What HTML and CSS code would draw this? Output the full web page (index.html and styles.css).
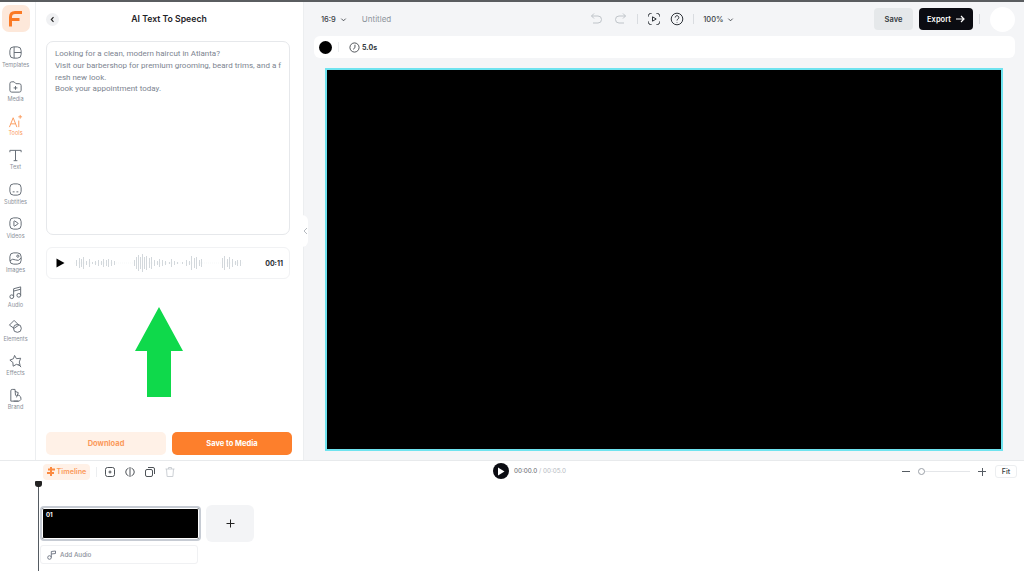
FILE: index.html
```html
<!DOCTYPE html>
<html lang="en">
<head>
<meta charset="utf-8">
<title>AI Text To Speech</title>
<link rel="stylesheet" href="styles.css">
</head>
<body>
<div class="app">
  <div class="topline"></div>
  <div class="main">
    <nav class="rail">
      <div class="logo">
        <svg width="13" height="16" viewBox="0 0 13 16"><path class="logo-f" d="M1.500 15.500V6q0-4.500 4.500-4.500h7M1.500 8.500h9"/></svg>
      </div>
      <div class="rail-item">
        <svg class="ri" viewBox="0 0 16 16"><rect x="2" y="2" width="12" height="12" rx="4"/><path d="M6.500 2v12M6.500 8H14"/></svg>
        <span>Templates</span>
      </div>
      <div class="rail-item">
        <svg class="ri" viewBox="0 0 16 16"><path d="M2 5q0-2 2-2h2.500l2 2H12q2 0 2 2v5q0 2-2 2H4q-2 0-2-2zM8 7.500v4M6 9.500h4"/></svg>
        <span>Media</span>
      </div>
      <div class="rail-item active">
        <svg class="ri" viewBox="0 0 16 16"><path d="M1.500 14 5.500 4l4 10M3 10.500h5M11.500 7v7M13 1v4M11 3h4"/></svg>
        <span>Tools</span>
      </div>
      <div class="rail-item">
        <svg class="ri" viewBox="0 0 16 16"><path d="M2 4.500V2.500h12v2M8 2.500v11M6 13.500h4"/></svg>
        <span>Text</span>
      </div>
      <div class="rail-item">
        <svg class="ri" viewBox="0 0 16 16"><rect x="2" y="2" width="12" height="12" rx="4"/><path d="M5 10.500h2M9 10.500h2"/></svg>
        <span>Subtitles</span>
      </div>
      <div class="rail-item">
        <svg class="ri" viewBox="0 0 16 16"><rect x="2" y="2" width="12" height="12" rx="4"/><path d="M6.300 5.800q0-.8.800-.5l3.300 2.100q.6.600 0 1.200l-3.300 2.100q-.8.300-.8-.5z"/></svg>
        <span>Videos</span>
      </div>
      <div class="rail-item">
        <svg class="ri" viewBox="0 0 16 16"><rect x="2" y="2" width="12" height="12" rx="4"/><circle cx="10.500" cy="5.500" r="1.200"/><path d="M2 10.500q3-3 6-1t6-2"/></svg>
        <span>Images</span>
      </div>
      <div class="rail-item">
        <svg class="ri" viewBox="0 0 16 16"><circle cx="4" cy="12.500" r="2"/><circle cx="11.500" cy="11" r="2"/><path d="M6 12.500V4l7.500-2v9M6 6.500l7.500-2"/></svg>
        <span>Audio</span>
      </div>
      <div class="rail-item">
        <svg class="ri" viewBox="0 0 16 16"><path d="M6.500 1.500 11.500 6.500 6.500 10 1.500 6.500z"/><circle cx="10" cy="10" r="4.200"/></svg>
        <span>Elements</span>
      </div>
      <div class="rail-item">
        <svg class="ri" viewBox="0 0 16 16"><path d="M7 1.500l2 3.500 4.500-.5-1.500 4 1 4-4-1.500-3.500 2-.3-4L2 6.500 5.800 5zM11 11l3 3"/></svg>
        <span>Effects</span>
      </div>
      <div class="rail-item">
        <svg class="ri" viewBox="0 0 16 16"><path d="M3 14V3q0-1.500 1.500-1.500h3L8 8M3 14h8"/><path d="M7.500 3.500 11 5l-2 5M9 8a3 3 0 1 1 3 6H6"/></svg>
        <span>Brand</span>
      </div>
    </nav>

    <section class="panel">
      <header class="panel-head">
        <span class="back"><svg width="7" height="7" viewBox="0 0 7 7"><path d="M4.500 1.200 2.300 3.500l2.200 2.300"/></svg></span>
        <h1>AI Text To Speech</h1>
      </header>
      <div class="textbox">Looking for a clean, modern haircut in Atlanta?<br>Visit our barbershop for premium grooming, beard trims, and a fresh new look.<br>Book your appointment today.</div>
      <div class="player">
        <svg class="play-tri" width="9" height="10" viewBox="0 0 9 10"><path d="M0.500 0.500 8.500 5 0.500 9.500z"/></svg>
        <svg class="wave" width="170" height="22" viewBox="0 0 170 22"><path d="M0 11h170" class="wave-base"/><path class="wave-bars" d="M2 8v6M5 6v10M7 7v8M9 5v12M12 9v4M15 7v8M18 10v2M21 9v4M24 8v6M27 9v4M29 7v8M32 8v6M34 7v8M37 8v6M40 9v4M60 8v6M62 5v12M64 3v16M66 5v12M68 2v18M70 5v12M72 4v14M75 6v10M77 5v12M80 8v6M83 9v4M85 7v8M88 8v6M91 9v4M95 10v2M97 7v8M100 9v4M103 10v2M108 10v2M112 8v6M115 9v4M117 4v14M120 6v10M122 5v12M125 8v6M127 7v8M148 6v10M150 4v14M153 7v8M155 5v12M158 7v8M161 9v4M163 8v6M166 8v6"/></svg>
        <span class="dur">00:11</span>
      </div>
      <div class="panel-spacer"></div>
      <div class="panel-actions">
        <button class="btn-soft">Download</button>
        <button class="btn-solid">Save to Media</button>
      </div>
      <svg class="arrow" width="50" height="92" viewBox="0 0 50 92"><path d="M25 1 49 45H37V91H13V45H1z"/></svg>
    </section>

    <section class="editor">
      <span class="collapse"><svg width="5" height="8" viewBox="0 0 5 8"><path d="M4 1 1 4l3 3"/></svg></span>
      <header class="topbar">
        <span class="ratio">16:9 <svg class="chev" viewBox="0 0 8 8"><path d="M1.500 3 4 5.500 6.500 3"/></svg></span>
        <span class="doc-name">Untitled</span>
        <div class="top-tools">
          <svg class="ti faint undo" viewBox="0 0 14 14"><path d="M5 1.500 2.500 4 5 6.500M2.500 4H9a3 3 0 0 1 0 7H4"/></svg>
          <svg class="ti faint" viewBox="0 0 14 14"><path d="M9 1.500 11.500 4 9 6.500M11.500 4H5a3 3 0 0 0 0 7h5"/></svg>
          <i class="vsep"></i>
          <svg class="ti" viewBox="0 0 14 14"><path d="M1.500 4.500v-1a2 2 0 0 1 2-2h1M9.500 1.500h1a2 2 0 0 1 2 2v1M12.500 9.500v1a2 2 0 0 1-2 2h-1M4.500 12.500h-1a2 2 0 0 1-2-2v-1"/><path d="M5.500 4.800v4.400L9.200 7z"/></svg>
          <svg class="ti" viewBox="0 0 14 14"><circle cx="7" cy="7" r="5.800"/><path d="M5.200 5.500a1.800 1.800 0 1 1 2.800 1.500q-1 .6-1 1.500M7 10v.6"/></svg>
          <i class="vsep"></i>
          <span class="zoom">100% <svg class="chev" viewBox="0 0 8 8"><path d="M1.500 3 4 5.500 6.500 3"/></svg></span>
        </div>
        <button class="btn-save">Save</button>
        <button class="btn-export">Export <svg width="10" height="8" viewBox="0 0 10 8"><path d="M1 4h8M6 1l3 3-3 3"/></svg></button>
        <i class="vsep"></i>
        <span class="avatar"></span>
      </header>
      <div class="propbar">
        <span class="swatch"></span>
        <i class="vsep"></i>
        <svg class="clock" viewBox="0 0 12 12"><circle cx="6" cy="6" r="5"/><path d="M6.500 3v3.200L4.500 8"/></svg>
        <span class="secs">5.0s</span>
      </div>
      <div class="stage-wrap"><div class="stage"></div></div>
    </section>
  </div>

  <footer class="timeline">
    <div class="tl-bar">
      <div class="tl-left">
        <span class="tl-pill">
          <svg width="8" height="9" viewBox="0 0 8 9"><path d="M3 0h2v1.500h3v2H5V5h2v2H5v2H3V7H0V5h3V3.500H1v-2h2z"/></svg>
          Timeline
        </span>
        <i class="vsep"></i>
        <svg class="tli" viewBox="0 0 12 12"><rect x="1.500" y="1.500" width="9" height="9" rx="2"/><path d="M6 4.500v3M4.500 6h3"/></svg>
        <svg class="tli" viewBox="0 0 12 12"><path d="M6 1v10M4.500 2.200a4 4 0 0 0 0 7.600M7.500 2.200a4 4 0 0 1 0 7.600"/></svg>
        <svg class="tli" viewBox="0 0 12 12"><rect x="1.500" y="3.500" width="7" height="7" rx="1.500"/><path d="M4 1.500h5a1.500 1.500 0 0 1 1.500 1.500v5"/></svg>
        <svg class="tli off" viewBox="0 0 12 12"><path d="M1.500 3h9M4.500 3V1.500h3V3M2.500 3l.6 7.500h5.800L9.500 3"/></svg>
      </div>
      <div class="tl-center">
        <span class="tl-play"><svg width="8" height="9" viewBox="0 0 8 9"><path d="M1 .5 7.500 4.500 1 8.500z"/></svg></span>
        <span class="time"><b>00:00.0</b> / 00:05.0</span>
      </div>
      <div class="tl-right">
        <span class="pm"></span>
        <span class="slider"><i></i></span>
        <span class="pm plus"></span>
        <button class="fit">Fit</button>
      </div>
    </div>
    <div class="tracks">
      <div class="clips">
        <div class="clip"><span>01</span></div>
        <div class="add-clip"><svg width="9" height="9" viewBox="0 0 9 9"><path d="M4.500.5v8M.5 4.500h8"/></svg></div>
      </div>
      <div class="audio-row">
        <svg class="note" viewBox="0 0 10 10"><circle cx="2.500" cy="7.500" r="1.800"/><path d="M4.300 7.500V1.500L8.500 1v2.500L4.300 4"/></svg>
        Add Audio
      </div>
    </div>
    <div class="playhead"></div>
  </footer>
</div>
</body>
</html>
```
FILE: styles.css
```css
* { box-sizing: border-box; }
html, body { margin: 0; padding: 0; height: 100%; overflow: hidden; }
body { font-family: Inter, "Liberation Sans", sans-serif; color: #111827; background: #fff; }
button { font-family: inherit; border: 0; padding: 0; flex: none; }
svg { display: block; flex: none; }
i { display: block; }

.app { width: 1024px; height: 571px; display: flex; flex-direction: column; }
.topline { height: 2px; background: #5a5d60; flex: none; }
.main { height: 458px; flex: none; display: flex; }

.rail { width: 36px; flex: none; border-right: 1px solid #eceef0; display: flex; flex-direction: column; align-items: center; padding-right: 4px; }
.logo { width: 28px; height: 27px; flex: none; margin-top: 3px; margin-bottom: 7px; border-radius: 7px; background: #fde8da; display: flex; align-items: center; justify-content: center; }
.logo-f { fill: none; stroke: #fb7a24; stroke-width: 3; }
.rail-item { width: 100%; height: 34.300px; flex: none; display: flex; flex-direction: column; align-items: center; padding-top: 6px; color: #8a9099; font-size: 5.600px; line-height: 7px; white-space: nowrap; }
.ri { width: 15px; height: 15px; margin-bottom: 1.500px; fill: none; stroke: #5f6670; stroke-width: 1; }
.rail-item.active { color: #fb9a5b; }
.rail-item.active .ri { stroke: #fb9a5b; }

.panel { position: relative; width: 267px; flex: none; background: #fff; padding: 0 13px 5px 10px; display: flex; flex-direction: column; }
.panel-head { position: relative; height: 39px; flex: none; display: flex; align-items: center; justify-content: center; padding-left: 2px; padding-bottom: 5px; }
.panel-head h1 { margin: 0; font-size: 8.700px; line-height: 12px; font-weight: 600; color: #1f2328; }
.back { position: absolute; left: 0; top: 10.500px; width: 13px; height: 13px; border-radius: 50%; background: #f0f1f3; display: flex; align-items: center; justify-content: center; }
.back path { fill: none; stroke: #222; stroke-width: 1.100; }
.textbox { height: 194px; flex: none; border: 1px solid #e6e8eb; border-radius: 7px; padding: 6px 8px; font: 400 8px/11.800px Roboto, sans-serif; color: #7c8490; word-break: break-all; }
.player { margin-top: 12px; height: 32px; flex: none; border: 1px solid #f1f2f4; border-radius: 6px; display: flex; align-items: center; padding: 0 6px 0 9px; }
.play-tri path { fill: #000; }
.wave { margin-left: 9px; }
.wave-base { stroke: #eef0f1; stroke-width: .5; stroke-dasharray: 1 1; fill: none; }
.wave-bars { stroke: #d3d8dc; stroke-width: 1; fill: none; shape-rendering: crispEdges; }
.dur { margin-left: auto; font-size: 7px; font-weight: 700; color: #2a2e33; }
.panel-spacer { flex: 1; }
.panel-actions { display: flex; gap: 6px; width: 246px; }
.panel-actions button { width: 120px; height: 23px; border-radius: 5px; font-size: 7.500px; font-weight: 700; }
.btn-soft { background: #fff1e7; color: #fb9a5b; }
.btn-solid { background: #fd7f2c; color: #fff; }
.arrow { position: absolute; left: 98px; top: 304px; }
.arrow path { fill: #0fd94b; }

.editor { position: relative; flex: 1; min-width: 0; background: #f4f5f7; border-left: 1px solid #eceef0; display: flex; flex-direction: column; }
.collapse { position: absolute; left: -2px; top: 213px; width: 6px; height: 32px; background: #fff; border-radius: 0 6px 6px 0; display: flex; align-items: center; justify-content: center; }
.collapse path { fill: none; stroke: #b5bac0; stroke-width: 1; }
.topbar { height: 34px; flex: none; display: flex; align-items: center; padding: 0 9px 0 17px; }
.ratio, .zoom { display: flex; align-items: center; gap: 4px; font-size: 7.500px; font-weight: 500; color: #3a3f45; }
.chev { width: 7px; height: 7px; fill: none; stroke: #3a3f45; stroke-width: 1; }
.doc-name { margin-left: 15px; font-size: 8px; color: #8d949c; }
.top-tools { margin-left: 198px; display: flex; align-items: center; gap: 9px; }
.ti { width: 14px; height: 14px; fill: none; stroke: #2f343a; stroke-width: 1; }
.ti.faint { stroke: #bfc4c9; }
.ti.undo { margin-right: 2px; }
.vsep { width: 1px; height: 10px; background: #d9dce0; flex: none; }
.btn-save { margin-left: auto; width: 39px; height: 22px; border-radius: 4px; background: #e5e8ea; font-size: 7.500px; font-weight: 600; color: #33383d; }
.btn-export { margin-left: 6px; margin-right: 6px; width: 54px; height: 22px; border-radius: 4px; background: #0b0c12; color: #fff; font-size: 7.500px; font-weight: 600; display: flex; align-items: center; justify-content: center; gap: 4px; }
.btn-export path { fill: none; stroke: #fff; stroke-width: 1.200; }
.avatar { margin-left: 10px; width: 25px; height: 25px; flex: none; border-radius: 50%; background: #fff; }
.propbar { margin: 0 9px 0 10px; height: 22px; flex: none; background: #fff; border-radius: 6px; display: flex; align-items: center; padding-left: 5px; }
.swatch { width: 13px; height: 13px; border-radius: 50%; background: #000; }
.propbar .vsep { margin: 0 10px 0 6px; background: #eceef0; }
.clock { width: 11px; height: 11px; fill: none; stroke: #2f343a; stroke-width: .9; margin-right: 2px; }
.secs { font-size: 7px; font-weight: 700; color: #33383d; }
.stage-wrap { padding: 10px 21px 0 21px; }
.stage { height: 383px; background: #000; border: 2px solid #6fe3ef; }

.timeline { position: relative; flex: 1; border-top: 1px solid #e8eaec; background: #fff; }
.tl-bar { height: 21px; display: flex; align-items: center; position: relative; }
.tl-left { display: flex; align-items: center; gap: 8px; padding-left: 43px; }
.tl-pill { height: 16px; width: 47px; border-radius: 4px; background: #fff1e7; color: #fb9a5b; font-size: 7.200px; font-weight: 600; display: flex; align-items: center; justify-content: center; gap: 2px; }
.tl-pill path { fill: #fb8a40; }
.tl-left .vsep { margin: 0 -1px 0 -2px; background: #eceef0; }
.tli { width: 12px; height: 12px; fill: none; stroke: #3a3f45; stroke-width: .9; }
.tli.off { stroke: #c6cbd0; }
.tl-center { position: absolute; left: 493px; top: 0; display: flex; align-items: center; gap: 5px; height: 20px; }
.tl-play { width: 16px; height: 16px; border-radius: 50%; background: #0b0c12; display: flex; align-items: center; justify-content: center; }
.tl-play path { fill: #fff; }
.time { font-size: 6.300px; color: #b3b8be; }
.time b { font-weight: 400; color: #5b6068; }
.tl-right { margin-left: auto; display: flex; align-items: center; padding-right: 7px; }
.pm { position: relative; width: 8px; height: 8px; background: linear-gradient(#555b62, #555b62) center/8px 1px no-repeat; }
.pm.plus { background: linear-gradient(#555b62, #555b62) center/8px 1px no-repeat, linear-gradient(#555b62, #555b62) center/1px 8px no-repeat; }
.slider { position: relative; width: 51px; height: 1px; background: #e4e6e9; margin: 0 8px 0 9px; }
.slider i { position: absolute; left: -1px; top: -3px; width: 7px; height: 7px; border-radius: 50%; background: #fff; border: 1px solid #9aa0a7; }
.fit { width: 22px; height: 13px; margin-left: 9px; background: #fff; border: 1px solid #eceef0; border-radius: 3px; font-size: 7px; font-weight: 500; color: #33383d; }
.tracks { padding: 23px 0 0 40px; }
.clips { display: flex; align-items: center; gap: 5px; }
.clip { width: 161px; height: 35px; border: 2px solid #c6cbd3; border-radius: 4px; background: #000; color: #fff; font-size: 6px; font-weight: 700; line-height: 7px; padding: 3px 4px; box-shadow: inset 0 0 0 1px #fff; }
.add-clip { width: 48px; height: 37px; background: #f3f4f6; border-radius: 6px; display: flex; align-items: center; justify-content: center; }
.add-clip path { stroke: #222; stroke-width: 1; fill: none; }
.audio-row { margin-top: 3px; width: 158px; height: 19px; border: 1px solid #f0f1f3; border-radius: 3px; display: flex; align-items: center; gap: 3px; padding-left: 6px; font-size: 6.300px; font-weight: 500; color: #8a9099; }
.note { width: 10px; height: 10px; fill: none; stroke: #6b7280; stroke-width: .9; }
.playhead { position: absolute; left: 38px; top: 20px; bottom: 0; width: 1px; background: #555b62; }
.playhead::before { content: ""; position: absolute; left: -3px; top: 0; width: 7px; height: 6px; background: #222; border-radius: 1px 1px 3px 3px; }
```
